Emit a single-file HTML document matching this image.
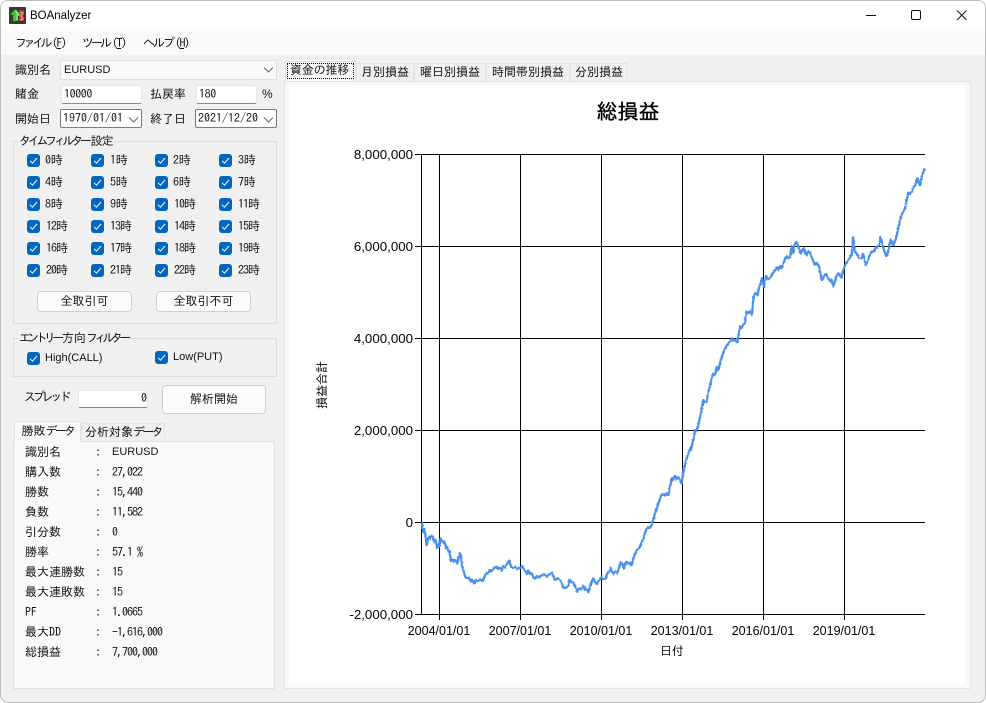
<!DOCTYPE html>
<html lang="ja"><head><meta charset="utf-8"><title>BOAnalyzer</title>
<style>
html,body{margin:0;padding:0;background:#fff}
body{width:986px;height:703px;position:relative;overflow:hidden;font-family:"IPAGothic","Liberation Sans","Noto Sans CJK JP",sans-serif;font-size:12px;color:#111}
#win{position:absolute;left:0;top:0;width:984px;height:701px;border:1px solid #bdbdbd;border-radius:8px;background:#f0f0f0;overflow:hidden}
.a{position:absolute;box-sizing:border-box}
.t{position:absolute;white-space:nowrap;line-height:14px;height:14px}
.s{font-family:"Liberation Sans",sans-serif;font-size:11px}
.v{letter-spacing:-1px}
.h{letter-spacing:-.3px}
.hh{letter-spacing:-1px}
.c{position:absolute;width:13px;height:13px;border-radius:3px;background:#0067c0}
.c svg{position:absolute;left:0;top:0}
.in{position:absolute;box-sizing:border-box;background:#fff;border:1px solid #e6e6e6;border-bottom:1px solid #8a8a8a;border-radius:2px}
.dd{position:absolute;box-sizing:border-box;background:#fff;border:1px solid #7a7a7a;border-radius:2px}
.btn{position:absolute;box-sizing:border-box;background:#fbfbfb;border:1px solid #d0d0d0;border-radius:4px;text-align:center}
.g{position:absolute;box-sizing:border-box;border:1px solid #dcdcdc}
.tab{position:absolute;box-sizing:border-box;background:#f0f0f0;border:1px solid #e3e3e3;border-bottom:0;text-align:center;line-height:17px;white-space:nowrap}
.k{letter-spacing:-3px}
.p{letter-spacing:-1.500px}
</style></head><body>
<div id="win">
<div style="position:absolute;left:-1px;top:-1px;width:986px;height:703px">
<!-- title bar -->
<div class="a" style="left:1px;top:1px;width:984px;height:30px;background:#fff"></div>
<svg class="a" style="left:9px;top:7px" width="17" height="17" viewBox="0 0 17 17"><rect width="17" height="17" rx="1" fill="#3a3a2a"/><path d="M10 3h5v11h-5z" fill="#d8262c"/><path d="M11 5l3 1-2 3 2 3-3 1" fill="none" stroke="#f4c0c0" stroke-width="1"/><path d="M6.500 2L12 8H9v6H4V8H1z" fill="#3cc23c"/><path d="M6.500 4L10 8H8v5" fill="none" stroke="#c0f0a0" stroke-width="1"/></svg>
<div class="t" style="left:30px;top:9px;font-family:'Liberation Sans',sans-serif;font-size:11.500px;color:#000">BOAnalyzer</div>
<svg class="a" style="left:860px;top:8px" width="110" height="16" viewBox="0 0 110 16" fill="none" stroke="#111" stroke-width="1"><path d="M6 7.500H16"/><rect x="51.500" y="2.500" width="9" height="9" rx="1.500"/><path d="M97 2.500L106.500 12M106.500 2.500L97 12"/></svg>
<!-- menu -->
<div class="a" style="left:1px;top:31px;width:984px;height:24px;background:#f9f9f9"></div>
<div class="t" style="left:15px;top:36px"><span style="letter-spacing:-3.500px">ファイル</span><span class="p" style="margin-left:3px">(<u>F</u>)</span></div>
<div class="t" style="left:82px;top:36px"><span class="k">ツール</span><span class="p" style="margin-left:3px">(<u>T</u>)</span></div>
<div class="t" style="left:143px;top:36px"><span style="letter-spacing:-2px">ヘルプ</span><span class="p" style="margin-left:2px">(<u>H</u>)</span></div>
<!-- top form -->
<div class="t" style="left:15px;top:63px">識別名</div>
<div class="a" style="left:60px;top:60px;width:217px;height:20px;background:#fafafa;border:1px solid #dedede;border-radius:2px"></div>
<div class="t s" style="left:64px;top:63px">EURUSD</div>
<svg class="a" style="left:263px;top:66px" width="11" height="8" fill="none" stroke="#666"><path d="M1 1.500L5.500 6 10 1.500"/></svg>
<div class="t" style="left:15px;top:87px">賭金</div>
<div class="in" style="left:61px;top:85px;width:81px;height:19px"></div>
<div class="t" style="left:64px;top:87px;letter-spacing:-.4px">10000</div>
<div class="t" style="left:150px;top:87px">払戻率</div>
<div class="in" style="left:196px;top:85px;width:61px;height:19px"></div>
<div class="t" style="left:199px;top:87px;letter-spacing:-.4px">180</div>
<div class="t" style="left:262px;top:87px;font-family:'Liberation Sans',sans-serif">%</div>
<div class="t" style="left:15px;top:112px">開始日</div>
<div class="dd" style="left:60px;top:109px;width:82px;height:19px"></div>
<div class="t" style="left:63px;top:111px">1970/01/01</div>
<svg class="a" style="left:128px;top:116px" width="11" height="8" fill="none" stroke="#666"><path d="M1 1.500L5.500 6 10 1.500"/></svg>
<div class="t" style="left:150px;top:112px">終了日</div>
<div class="dd" style="left:195px;top:109px;width:82px;height:19px"></div>
<div class="t" style="left:198px;top:111px">2021/12/20</div>
<svg class="a" style="left:263px;top:116px" width="11" height="8" fill="none" stroke="#666"><path d="M1 1.500L5.500 6 10 1.500"/></svg>
<!-- time filter -->
<div class="g" style="left:13px;top:141px;width:264px;height:183px"></div>
<div class="t" style="left:18px;top:134px;background:#f0f0f0;padding:0 1px"><span style="letter-spacing:-3.300px">タイムフィルター</span><span style="margin-left:2px;letter-spacing:-1px">設定</span></div>
<svg width="0" height="0" style="position:absolute"><defs><path id="k" d="M3 6.800L5.500 9.200 10 4" fill="none" stroke="#fff" stroke-width="1"/></defs></svg>
<div class="c" style="left:27px;top:154px"><svg width="13" height="13"><use href="#k"/></svg></div><div class="t h" style="left:45px;top:153px">0時</div>
<div class="c" style="left:91px;top:154px"><svg width="13" height="13"><use href="#k"/></svg></div><div class="t h" style="left:110px;top:153px">1時</div>
<div class="c" style="left:155px;top:154px"><svg width="13" height="13"><use href="#k"/></svg></div><div class="t h" style="left:173px;top:153px">2時</div>
<div class="c" style="left:219px;top:154px"><svg width="13" height="13"><use href="#k"/></svg></div><div class="t h" style="left:238px;top:153px">3時</div>
<div class="c" style="left:27px;top:176px"><svg width="13" height="13"><use href="#k"/></svg></div><div class="t h" style="left:45px;top:175px">4時</div>
<div class="c" style="left:91px;top:176px"><svg width="13" height="13"><use href="#k"/></svg></div><div class="t h" style="left:110px;top:175px">5時</div>
<div class="c" style="left:155px;top:176px"><svg width="13" height="13"><use href="#k"/></svg></div><div class="t h" style="left:173px;top:175px">6時</div>
<div class="c" style="left:219px;top:176px"><svg width="13" height="13"><use href="#k"/></svg></div><div class="t h" style="left:238px;top:175px">7時</div>
<div class="c" style="left:27px;top:198px"><svg width="13" height="13"><use href="#k"/></svg></div><div class="t h" style="left:45px;top:197px">8時</div>
<div class="c" style="left:91px;top:198px"><svg width="13" height="13"><use href="#k"/></svg></div><div class="t h" style="left:110px;top:197px">9時</div>
<div class="c" style="left:155px;top:198px"><svg width="13" height="13"><use href="#k"/></svg></div><div class="t hh" style="left:174px;top:197px">10時</div>
<div class="c" style="left:219px;top:198px"><svg width="13" height="13"><use href="#k"/></svg></div><div class="t hh" style="left:238px;top:197px">11時</div>
<div class="c" style="left:27px;top:220px"><svg width="13" height="13"><use href="#k"/></svg></div><div class="t hh" style="left:46px;top:219px">12時</div>
<div class="c" style="left:91px;top:220px"><svg width="13" height="13"><use href="#k"/></svg></div><div class="t hh" style="left:110px;top:219px">13時</div>
<div class="c" style="left:155px;top:220px"><svg width="13" height="13"><use href="#k"/></svg></div><div class="t hh" style="left:174px;top:219px">14時</div>
<div class="c" style="left:219px;top:220px"><svg width="13" height="13"><use href="#k"/></svg></div><div class="t hh" style="left:238px;top:219px">15時</div>
<div class="c" style="left:27px;top:242px"><svg width="13" height="13"><use href="#k"/></svg></div><div class="t hh" style="left:46px;top:241px">16時</div>
<div class="c" style="left:91px;top:242px"><svg width="13" height="13"><use href="#k"/></svg></div><div class="t hh" style="left:110px;top:241px">17時</div>
<div class="c" style="left:155px;top:242px"><svg width="13" height="13"><use href="#k"/></svg></div><div class="t hh" style="left:174px;top:241px">18時</div>
<div class="c" style="left:219px;top:242px"><svg width="13" height="13"><use href="#k"/></svg></div><div class="t hh" style="left:238px;top:241px">19時</div>
<div class="c" style="left:27px;top:264px"><svg width="13" height="13"><use href="#k"/></svg></div><div class="t hh" style="left:46px;top:263px">20時</div>
<div class="c" style="left:91px;top:264px"><svg width="13" height="13"><use href="#k"/></svg></div><div class="t hh" style="left:110px;top:263px">21時</div>
<div class="c" style="left:155px;top:264px"><svg width="13" height="13"><use href="#k"/></svg></div><div class="t hh" style="left:174px;top:263px">22時</div>
<div class="c" style="left:219px;top:264px"><svg width="13" height="13"><use href="#k"/></svg></div><div class="t hh" style="left:238px;top:263px">23時</div>
<div class="btn" style="left:37px;top:291px;width:95px;height:21px;line-height:19px">全取引可</div>
<div class="btn" style="left:156px;top:291px;width:95px;height:21px;line-height:19px">全取引不可</div>
<!-- entry filter -->
<div class="g" style="left:13px;top:338px;width:264px;height:39px"></div>
<div class="t" style="left:18px;top:331px;background:#f0f0f0;padding:0 1px"><span style="letter-spacing:-3.700px">エントリー</span><span style="margin-left:1.500px;letter-spacing:0">方向</span><span style="letter-spacing:-3.700px">フィルター</span></div>
<div class="c" style="left:27px;top:352px"><svg width="13" height="13"><use href="#k"/></svg></div><div class="t s" style="left:45px;top:351px">High(CALL)</div>
<div class="c" style="left:155px;top:351px"><svg width="13" height="13"><use href="#k"/></svg></div><div class="t s" style="left:173px;top:350px">Low(PUT)</div>
<!-- spread -->
<div class="t" style="left:24px;top:390px;letter-spacing:-3.200px">スプレッド</div>
<div class="in" style="left:78px;top:390px;width:70px;height:18px"></div>
<div class="t" style="left:141px;top:391px">0</div>
<div class="btn" style="left:162px;top:385px;width:104px;height:29px;line-height:26px">解析開始</div>
<!-- results tabs -->
<div class="a" style="left:13px;top:441px;width:262px;height:248px;background:#f9f9f9;border:1px solid #e0e0e0"></div>
<div class="tab" style="left:81px;top:423px;width:84px;height:18px">分析対象<span style="letter-spacing:-2.700px">データ</span></div>
<div class="tab" style="left:14px;top:421px;width:67px;height:21px;background:#f9f9f9;line-height:18px;z-index:2">勝敗<span style="letter-spacing:-2.700px">データ</span></div>
<div class="t" style="left:25px;top:445px">識別名</div><div class="t" style="left:95px;top:445px">:</div><div class="t s" style="left:112px;top:445px">EURUSD</div>
<div class="t" style="left:25px;top:465px">購入数</div><div class="t" style="left:95px;top:465px">:</div><div class="t v" style="left:112px;top:465px">27,022</div>
<div class="t" style="left:25px;top:485px">勝数</div><div class="t" style="left:95px;top:485px">:</div><div class="t v" style="left:112px;top:485px">15,440</div>
<div class="t" style="left:25px;top:505px">負数</div><div class="t" style="left:95px;top:505px">:</div><div class="t v" style="left:112px;top:505px">11,582</div>
<div class="t" style="left:25px;top:525px">引分数</div><div class="t" style="left:95px;top:525px">:</div><div class="t v" style="left:112px;top:525px">0</div>
<div class="t" style="left:25px;top:545px">勝率</div><div class="t" style="left:95px;top:545px">:</div><div class="t v" style="left:112px;top:545px">57.1 %</div>
<div class="t" style="left:25px;top:565px">最大連勝数</div><div class="t" style="left:95px;top:565px">:</div><div class="t v" style="left:112px;top:565px">15</div>
<div class="t" style="left:25px;top:585px">最大連敗数</div><div class="t" style="left:95px;top:585px">:</div><div class="t v" style="left:112px;top:585px">15</div>
<div class="t" style="left:25px;top:605px">PF</div><div class="t" style="left:95px;top:605px">:</div><div class="t v" style="left:112px;top:605px">1.0665</div>
<div class="t" style="left:25px;top:625px">最大DD</div><div class="t" style="left:95px;top:625px">:</div><div class="t v" style="left:112px;top:625px">−1,616,000</div>
<div class="t" style="left:25px;top:645px">総損益</div><div class="t" style="left:95px;top:645px">:</div><div class="t v" style="left:112px;top:645px">7,700,000</div>
<!-- right tabs -->
<div class="a" style="left:284px;top:81px;width:687px;height:608px;background:#f9f9f9;border:1px solid #e3e3e3"></div>
<div class="tab" style="left:285px;top:61px;width:71px;height:20px;background:#f9f9f9"></div>
<div class="a" style="left:287px;top:63px;width:67px;height:16px;border:1px dotted #000"></div>
<div class="t" style="left:290px;top:63px;letter-spacing:-.2px">資金の推移</div>
<div class="tab" style="left:356px;top:63px;width:58px;height:18px">月別損益</div>
<div class="tab" style="left:414px;top:63px;width:72px;height:18px">曜日別損益</div>
<div class="tab" style="left:486px;top:63px;width:84px;height:18px">時間帯別損益</div>
<div class="tab" style="left:570px;top:63px;width:58px;height:18px">分別損益</div>
<!-- chart -->
<svg class="a" style="left:290px;top:85px" width="675" height="598" viewBox="290 85 675 598">
<defs><filter id="fz" filterUnits="userSpaceOnUse" x="410" y="150" width="525" height="460"><feTurbulence type="fractalNoise" baseFrequency="0.6" numOctaves="1" seed="4" result="n"/><feDisplacementMap in="SourceGraphic" in2="n" scale="2.500" xChannelSelector="R" yChannelSelector="G"/></filter></defs>
<rect x="290" y="85" width="675" height="598" fill="#fff"/>
<g stroke="#000" stroke-width="1" fill="none" shape-rendering="crispEdges">
<path d="M415 154.500H925M415 246.500H925M415 338.500H925M415 430.500H925M415 522.500H925M415 614.500H925"/>
<path d="M421.500 154V615M439.500 154V620M520.500 154V620M601.500 154V620M682.500 154V620M763.500 154V620M844.500 154V620"/>
</g>
<polyline filter="url(#fz)" fill="none" stroke="#4a90ea" stroke-width="2.300" stroke-linejoin="round" points="421.700,522.300 422.500,528 423.300,531.700 424,529 425,532.700 425.800,538 426.700,545 427.800,539 429.300,536 430.500,538.500 431.500,535.500 433.300,538 434.500,542 435.500,540 437.300,548 438.500,544 439.500,546 440.700,538.300 442,541 443.500,543 444.500,541.500 446,548 447,546.500 448.300,551.700 449.500,551 450.700,561 452,559.500 453.500,561.500 455,560 457.300,563.300 458.500,557 460,553.300 461,556 462,566 463.500,570 465,576.700 467,578 469,577.500 470.500,581 472,579.500 474,583.300 476,580 478,581.500 480,579.500 482.700,580.700 484,578 485,575 486.700,572.700 488,573.500 490,570 492,571 494,568 496.700,566.700 498,569 500,568 501.700,570.700 503,566 505,567.500 507,564 509.300,560.700 510.500,565 511.500,567 513.300,568.300 515.500,567 517.500,569 520,567.500 522.700,566.700 524.500,570 526.700,574 528.300,570.700 530,574 531.500,573 533.300,577.300 535,578.500 537,576 539,577.500 541.700,575 544,574 546.700,576.700 549,574.500 551.700,572.700 553.500,576 555,580 557.500,578.500 560,580 562,584 563.300,587.300 565.500,588 567,587 568.300,586 569,581 570,580 571.500,582.500 573.300,582.700 575.500,587 577.300,591.700 579,588 581,589.500 583.300,585 585,590 586.500,588.500 588.300,592.700 589.500,588 591,583 593.300,578.300 595,582 597.300,584 599,580.500 601.700,576.700 603,579 605,579.300 607,574 609,571.500 610.700,568.300 612,572 613.300,574 615,571.500 617.300,573.300 619,568 620.700,562.300 622.500,564 624,568.300 625.500,563 626.700,561.700 628.500,564 630,563 631.700,565 633.500,558 635,554 636.700,550 638.500,549 640,546.700 642,541 643.300,539.300 645,533 646.700,528.500 648.500,527 650,528 651.700,525 653.500,519 655,513.500 657,508 658.500,503 660.700,496.700 662.500,494 664.500,495.500 666.500,493.500 668.300,495 670,487 671.700,478.300 673,480 675,476 676.500,479 678,477 680,480 681.700,483.300 683,474 685,465 686.500,459 688,455 690,448.300 691,450 692.500,443 694,437 695,430 696.500,431 698,426 699.300,420 700.500,415 702,407 703.300,400 704.500,402 706.700,401.700 708,393 710,386 711.500,379 713.300,373.300 715,375 717,367 718.500,370 720,363.300 722,356 724,351 726,346.700 728,344 730,340.700 731.700,338.300 733,341 735,340 737.300,342.300 738.500,335 740,326.700 741.500,328 743,325 745,323.300 745.800,316 746.700,311.700 748.500,313 750,311 751.700,315 752.800,304 754,295 755.500,293 757.300,295 759,288 760.500,284 761.700,278.300 763,283 764,287.300 765,281 766,276 768,279 770,278.300 772,274 774,272 776.700,267.300 778,270 780,266 781.500,268 783.300,264 785,259 786.700,256 788,258 790,257.300 790.800,251 791.700,246.700 792.500,252 793.300,253.300 794.500,245 796,241.700 797.500,244 799,249 800.700,253.300 802.500,250 804,248.300 805.500,254 806.700,255 808.500,251 810,252.700 812,258 813.500,262 815,265 817,263 819.300,266.700 820.500,274 821.700,280 823,279 824.500,275 826,274 828,278 830,281 831.500,280 833.300,286 835,281 836.500,276 838.300,273.300 840,276 841.700,277.300 843,271 845,265 847,262 849.500,258 851.700,255 852.500,246 853.300,237.300 854,246 855,251.700 857,254 859,258 861.700,258.300 863,254 864,256 865,262 866,265 868,260 870,254 871.700,251.700 873.500,252 875.500,248 877.500,247 879.300,245 880,237.300 881.500,240 882.700,245 884.500,252 886.700,256 888,252 889.500,246 890.700,239.300 892,243 893.300,245 895.500,240 897.300,233.300 899,225 900.700,216.700 902.500,213 905,208.300 906.500,201 908.300,192.700 910,194 911.700,191.700 913.500,187 915.500,185 917.300,178.300 918.500,182 920,185 921.500,178 923,173 925,168.300"/>
<g font-family="Liberation Sans,sans-serif" font-size="13.300" fill="#000" text-anchor="end">
<text x="413" y="159">8,000,000</text><text x="413" y="251">6,000,000</text><text x="413" y="343">4,000,000</text><text x="413" y="435">2,000,000</text><text x="413" y="527">0</text><text x="413" y="619">-2,000,000</text>
</g>
<g font-family="Liberation Sans,sans-serif" font-size="12.500" fill="#000" text-anchor="middle">
<text x="439" y="635">2004/01/01</text><text x="520" y="635">2007/01/01</text><text x="601" y="635">2010/01/01</text><text x="682" y="635">2013/01/01</text><text x="763" y="635">2016/01/01</text><text x="844" y="635">2019/01/01</text>
</g>
<text x="672" y="655" font-family="IPAGothic,Noto Sans CJK JP,sans-serif" font-size="12" text-anchor="middle" fill="#000">日付</text>
<text transform="translate(326 385) rotate(-90)" font-family="IPAGothic,Noto Sans CJK JP,sans-serif" font-size="12" text-anchor="middle" fill="#000">損益合計</text>
<text x="628" y="119" font-family="IPAGothic,Noto Sans CJK JP,sans-serif" font-size="21" stroke="#000" stroke-width=".35" text-anchor="middle" fill="#000">総損益</text>
</svg>
</div>
</div>
</body></html>
